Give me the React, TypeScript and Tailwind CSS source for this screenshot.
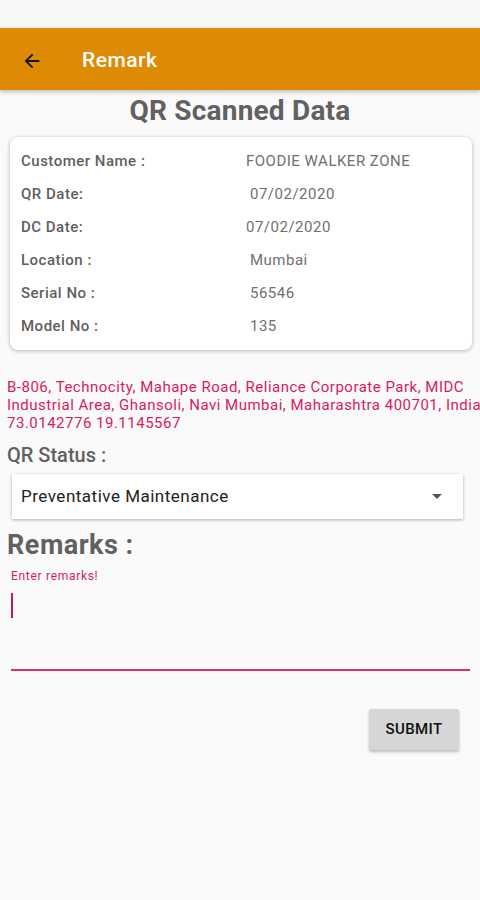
import React from "react";

const rows: { label: string; value: string; shift: string }[] = [
  { label: "Customer Name :", value: "FOODIE WALKER ZONE", shift: "pl-0" },
  { label: "QR Date:", value: "07/02/2020", shift: "pl-[4px]" },
  { label: "DC Date:", value: "07/02/2020", shift: "pl-0" },
  { label: "Location :", value: "Mumbai", shift: "pl-[4px]" },
  { label: "Serial No :", value: "56546", shift: "pl-[4px]" },
  { label: "Model No :", value: "135", shift: "pl-[4px]" },
];

export default function App() {
  return (
    <div
      className="w-[480px] h-[900px] bg-[#fafafa] flex flex-col overflow-hidden"
      style={{ fontFamily: "Roboto, 'Noto Sans', sans-serif" }}
    >
      <div className="h-[28px] bg-[#f7f7f7] shrink-0" />
      <div className="h-[62px] bg-[#de8a05] flex items-center pt-[3px] shrink-0 shadow-[0_2px_4px_rgba(0,0,0,0.25)] relative z-10">
        <svg className="ml-[21px]" width="22" height="22" viewBox="0 0 24 24">
          <path d="M20 11H7.83l5.59-5.59L12 4l-8 8 8 8 1.41-1.41L7.83 13H20v-2z" fill="#111" />
        </svg>
        <span className="ml-[39px] text-white text-[21px] tracking-[0.5px] font-medium leading-none">Remark</span>
      </div>

      <div className="mt-[5px] text-center text-[28px] leading-[32px] font-bold text-[#616161] tracking-[0.2px]">
        QR Scanned Data
      </div>

      <div className="mt-[10px] mx-[10px] w-[462px] h-[213px] bg-white rounded-[8px] shadow-[0_1px_4px_rgba(0,0,0,0.28)] pt-[8px] pb-[7px] pl-[11px]">
        {rows.map((r) => (
          <div key={r.label} className="h-[33px] flex items-center text-[15px] tracking-[0.5px]">
            <span className="w-[225px] font-medium text-[#5f5f5f]">{r.label}</span>
            <span className={`${r.shift} text-[#6f6f6f]`}>{r.value}</span>
          </div>
        ))}
      </div>

      <div className="mt-[28px] ml-[7px] text-[15px] tracking-[0.5px] leading-[18px] text-[#d81b60] whitespace-nowrap">
        B-806, Technocity, Mahape Road, Reliance Corporate Park, MIDC
        <br />
        Industrial Area, Ghansoli, Navi Mumbai, Maharashtra 400701, India
        <br />
        73.0142776 19.1145567
      </div>

      <div className="mt-[11px] ml-[7px] text-[20px] leading-[24px] font-medium text-[#616161]">
        QR Status :
      </div>

      <div className="mt-[7px] ml-[12px] w-[451px] h-[45px] bg-white shadow-[0_1px_3px_rgba(0,0,0,0.3)] flex items-center justify-between pl-[9px] pr-[21px]">
        <span className="text-[17px] tracking-[0.5px] text-[#222]">Preventative Maintenance</span>
        <svg width="10" height="5" viewBox="0 0 10 5">
          <path d="M0 0h10L5 5z" fill="#555" />
        </svg>
      </div>

      <div className="mt-[11px] ml-[7px] text-[27px] tracking-[0.5px] leading-[30px] font-bold text-[#616161]">
        Remarks :
      </div>

      <div className="mt-[9px] ml-[11px] text-[12px] tracking-[0.7px] leading-[14px] text-[#d81b60]">
        Enter remarks!
      </div>

      <div className="mt-[10px] ml-[11px] w-[2px] h-[25px] bg-[#c2185b]" />

      <div className="mt-[51px] ml-[11px] w-[459px] h-[2px] bg-[#d6336c]" />

      <div className="mt-[38px] flex justify-end pr-[21px]">
        <button className="w-[90px] h-[41px] bg-[#d6d6d6] rounded-[2px] shadow-[0_2px_3px_rgba(0,0,0,0.25)] text-[15px] tracking-[0.4px] font-medium text-[#111]">
          SUBMIT
        </button>
      </div>
    </div>
  );
}
